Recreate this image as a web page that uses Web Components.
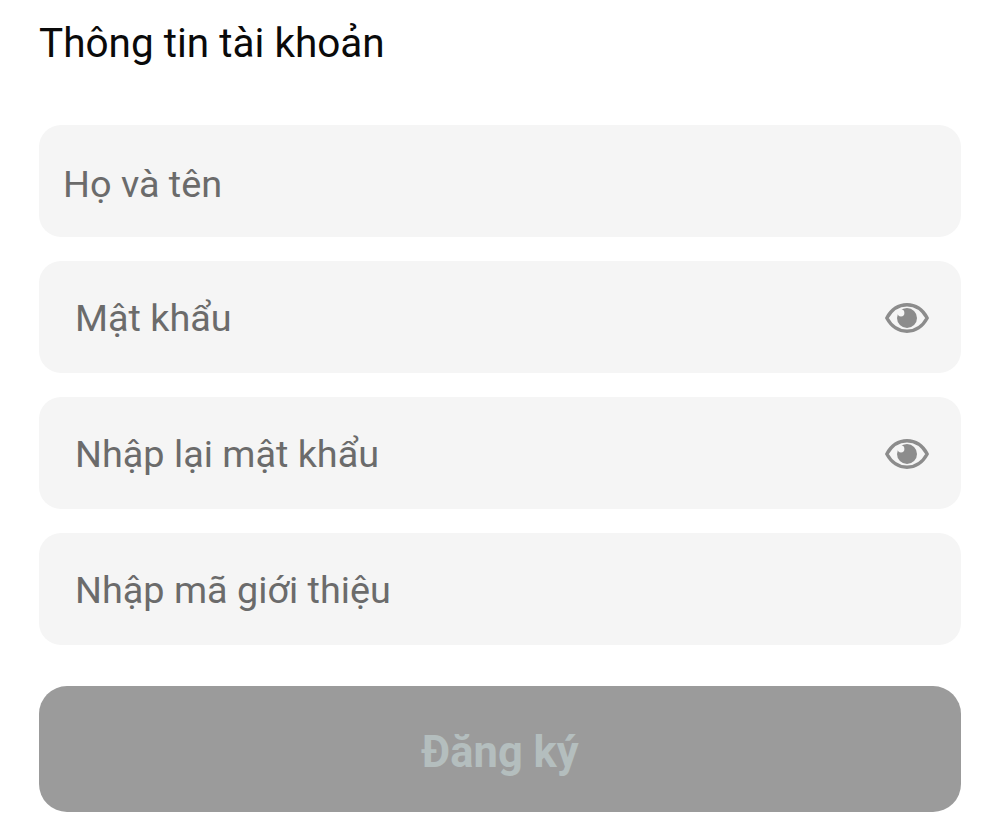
<!DOCTYPE html>
<html lang="vi">
<head>
<meta charset="utf-8">
<title>Thông tin tài khoản</title>
<style>
  html, body { margin: 0; background: #fff; }
  body { font-family: Roboto, "Liberation Sans", sans-serif; }
</style>
</head>
<body>
<account-form>
  <span slot="title">Thông tin tài khoản</span>
  <text-field indent="24" lift="4">Họ và tên</text-field>
  <text-field indent="36" secret>Mật khẩu</text-field>
  <text-field indent="36" secret>Nhập lại mật khẩu</text-field>
  <text-field indent="36">Nhập mã giới thiệu</text-field>
  <submit-button slot="action">Đăng ký</submit-button>
</account-form>

<script>
class AccountForm extends HTMLElement {
  constructor() {
    super();
    this.attachShadow({ mode: 'open' });
    this.shadowRoot.innerHTML = `
      <style>
        :host { display: block; padding: 19px 39px 0; }
        h1 {
          margin: 0 0 57px;
          font-size: 40.5px;
          line-height: 49px;
          font-weight: 400;
          color: #0a0a0a;
        }
        .fields { display: flex; flex-direction: column; gap: 24px; margin-bottom: 41px; }
      </style>
      <h1><slot name="title"></slot></h1>
      <div class="fields"><slot></slot></div>
      <slot name="action"></slot>
    `;
  }
}

class TextField extends HTMLElement {
  constructor() {
    super();
    this.attachShadow({ mode: 'open' });
    this.shadowRoot.innerHTML = `
      <style>
        :host {
          display: flex;
          align-items: center;
          justify-content: space-between;
          box-sizing: border-box;
          height: 112px;
          padding: 2px 32px 0 var(--indent, 36px);
          border-radius: 22px;
          background: #f5f5f5;
          color: #6b6b6b;
          font-size: 37.8px;
        }
        span { padding-top: var(--lift, 0); }
      </style>
      <span><slot></slot></span>
    `;
  }

  connectedCallback() {
    this.style.setProperty('--indent', this.getAttribute('indent') + 'px');
    if (this.hasAttribute('lift')) {
      this.style.setProperty('--lift', this.getAttribute('lift') + 'px');
    }
    if (this.hasAttribute('secret') && !this.shadowRoot.querySelector('eye-icon')) {
      this.shadowRoot.appendChild(document.createElement('eye-icon'));
    }
  }
}

class EyeIcon extends HTMLElement {
  constructor() {
    super();
    this.attachShadow({ mode: 'open' });
    this.shadowRoot.innerHTML = `
      <style>
        :host { display: block; width: 44px; height: 32px; }
        svg { display: block; width: 100%; height: 100%; }
      </style>
      <svg viewBox="0 0 44 32" fill="none">
        <path d="M1.800 16C6.500 7.500 13.500 2.800 22 2.800S37.500 7.500 42.200 16C37.500 24.500 30.500 29.200 22 29.200S6.500 24.500 1.800 16Z" stroke="#8c8c8c" stroke-width="3.400" stroke-linejoin="round"/>
        <circle cx="22" cy="16" r="10" fill="#8c8c8c"/>
        <circle cx="16" cy="11" r="3.400" fill="#f5f5f5"/>
      </svg>
    `;
  }
}

class SubmitButton extends HTMLElement {
  constructor() {
    super();
    this.attachShadow({ mode: 'open' });
    this.shadowRoot.innerHTML = `
      <style>
        :host {
          display: flex;
          align-items: center;
          justify-content: center;
          box-sizing: border-box;
          height: 126px;
          padding-top: 6px;
          border-radius: 28px;
          background: #9b9b9b;
          color: #b4bebe;
          font-size: 43.5px;
          font-weight: 700;
        }
      </style>
      <span><slot></slot></span>
    `;
  }
}

customElements.define('account-form', AccountForm);
customElements.define('text-field', TextField);
customElements.define('eye-icon', EyeIcon);
customElements.define('submit-button', SubmitButton);
</script>
</body>
</html>
